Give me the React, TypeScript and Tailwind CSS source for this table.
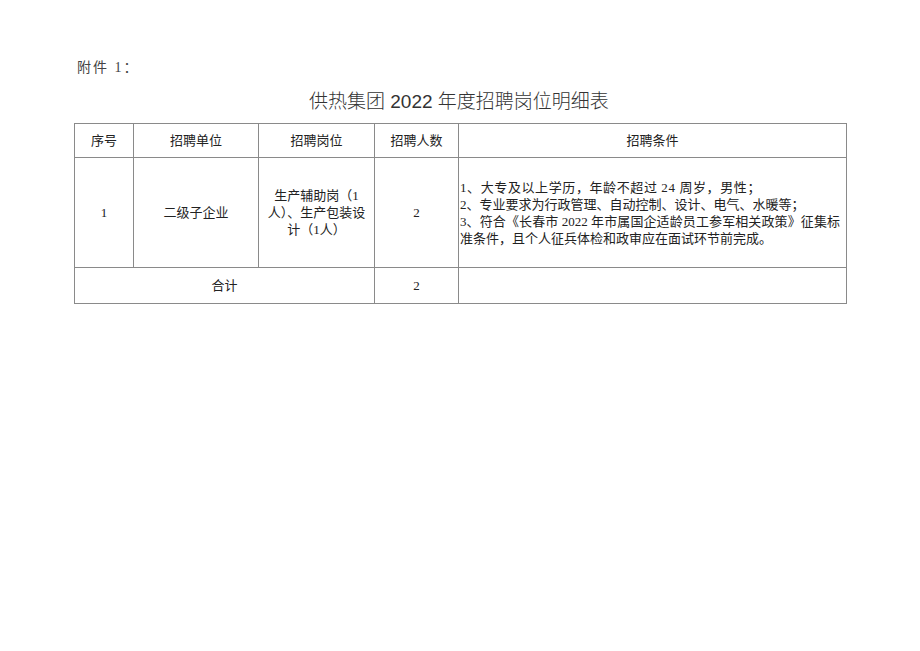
import React from 'react';

const serif = 'font-["Liberation_Serif","Noto_Sans_CJK_SC",serif]';

export default function App() {
  const cell = 'border border-[#8a8a8a] text-center align-middle';
  return (
    <div className={`min-h-screen w-[920px] bg-white text-[#222] ${serif}`}>
      <div className="pl-[77px] pt-[58px] text-[14px] leading-[20px] text-[#444] tracking-[2px]">附件 1：</div>
      <div className="mt-[12px] pl-[309px] text-[19px] leading-[24px] text-[#333] font-['Liberation_Sans','Noto_Sans_CJK_SC',sans-serif] font-light">
        供热集团 2022 年度招聘岗位明细表
      </div>
      <table className="ml-[74px] mt-[9px] w-[772px] table-fixed border-collapse text-[13px] leading-[17px]">
        <colgroup>
          <col className="w-[59px]" />
          <col className="w-[125px]" />
          <col className="w-[116px]" />
          <col className="w-[84px]" />
          <col className="w-[388px]" />
        </colgroup>
        <tbody>
          <tr className="h-[34px]">
            <td className={cell}>序号</td>
            <td className={cell}>招聘单位</td>
            <td className={cell}>招聘岗位</td>
            <td className={cell}>招聘人数</td>
            <td className={cell}>招聘条件</td>
          </tr>
          <tr className="h-[110px]">
            <td className={cell}>1</td>
            <td className={cell}>二级子企业</td>
            <td className={`${cell} px-[8px]`}>
              <div>生产辅助岗（1</div>
              <div>人）、生产包装设</div>
              <div>计（1人）</div>
            </td>
            <td className={cell}>2</td>
            <td className={`${cell} !text-left pl-[1px] pr-[6px]`}>
              <div className="tracking-[0.6px]">1、大专及以上学历，年龄不超过 24 周岁，男性；</div>
              <div>2、专业要求为行政管理、自动控制、设计、电气、水暖等；</div>
              <div className="text-justify [text-align-last:justify]">3、符合《长春市 2022 年市属国企适龄员工参军相关政策》征集标</div>
              <div>准条件，且个人征兵体检和政审应在面试环节前完成。</div>
            </td>
          </tr>
          <tr className="h-[36px]">
            <td className={cell} colSpan={3}>合计</td>
            <td className={cell}>2</td>
            <td className={cell}></td>
          </tr>
        </tbody>
      </table>
    </div>
  );
}
